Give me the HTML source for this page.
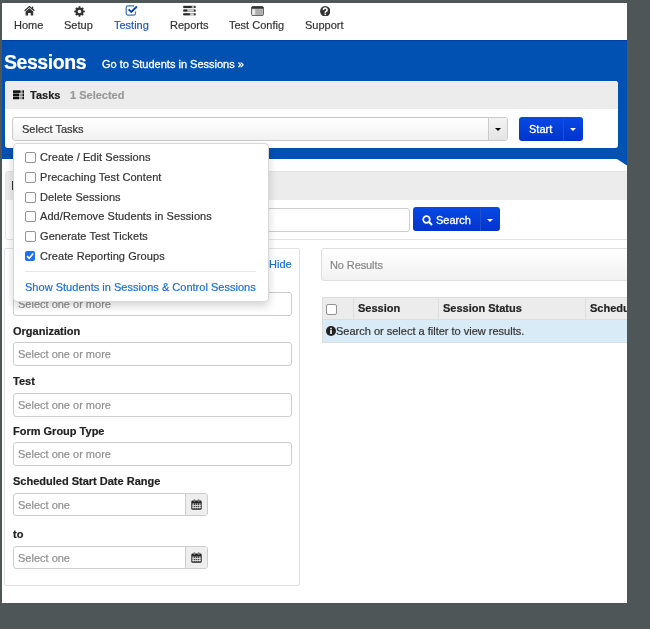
<!DOCTYPE html>
<html><head><meta charset="utf-8">
<style>
*{box-sizing:border-box;margin:0;padding:0}
html,body{width:650px;height:629px;overflow:hidden;background:#4f5657;font-family:"Liberation Sans",sans-serif}
.a{position:absolute}
.t{position:absolute;font-size:11px;line-height:11px;white-space:nowrap;color:#333;will-change:transform;-webkit-text-stroke:0.2px currentColor}
.b{font-weight:bold}
.caret{position:absolute;width:0;height:0;border-left:3px solid transparent;border-right:3px solid transparent;border-top:3px solid #000}
.btn{position:absolute;background:linear-gradient(#0849e6,#0034c9);border-radius:3px}
.inp{position:absolute;border:1px solid #cdcdcd;border-radius:3px;background:#fff}
.ph{color:#8f8f8f}
.chk{position:absolute;width:11px;height:11px;border:1px solid #939393;border-radius:2px;background:#fff}
</style></head><body>
<!-- page -->
<div class="a" style="left:2px;top:3px;width:625px;height:600px;background:#fff"></div>

<!-- nav -->
<svg class="a" style="left:24px;top:6px" width="12" height="10" viewBox="0 0 12 10"><polyline points="0.6,4.7 5.4,0.6 10.4,4.7" fill="none" stroke="#333" stroke-width="1.3"/><rect x="7.9" y="0.6" width="1.3" height="2.6" fill="#333"/><path d="M5.4 2.3 L9.2 5.4 V9.6 H6.7 V6.9 H4.1 V9.6 H1.6 V5.4 Z" fill="#333"/></svg>
<span class="t" style="left:14px;top:20px">Home</span>
<svg class="a" style="left:73.6px;top:5.6px" width="11" height="11" viewBox="0 0 11 11"><circle cx="5.5" cy="5.5" r="3" fill="none" stroke="#333" stroke-width="2.2"/><g stroke="#333" stroke-width="1.7"><line x1="5.5" y1="0.2" x2="5.5" y2="10.8"/><line x1="0.2" y1="5.5" x2="10.8" y2="5.5"/><line x1="1.8" y1="1.8" x2="9.2" y2="9.2"/><line x1="9.2" y1="1.8" x2="1.8" y2="9.2"/></g><circle cx="5.5" cy="5.5" r="1.7" fill="#fff"/></svg>
<span class="t" style="left:64px;top:20px">Setup</span>
<svg class="a" style="left:125px;top:5px" width="13" height="11" viewBox="0 0 13 11"><path d="M9 0.9 H2.7 A1.5 1.5 0 0 0 1.2 2.4 V8.6 A1.5 1.5 0 0 0 2.7 10.1 H9 A1.5 1.5 0 0 0 10.5 8.6 V6.6" fill="none" stroke="#3b6fc4" stroke-width="1.2"/><path d="M3.6 4.4 L6.3 7 L11.9 1.5" fill="none" stroke="#0d3fae" stroke-width="1.9"/></svg>
<span class="t" style="left:114px;top:20px;color:#1d5bb8">Testing</span>
<svg class="a" style="left:183px;top:5px" width="13" height="11" viewBox="0 0 13 11"><g fill="#aaa"><rect x="0" y="0.6" width="12.8" height="2.6" rx="1"/><rect x="0" y="4.3" width="12.8" height="2.6" rx="1"/><rect x="0" y="8" width="12.8" height="2.6" rx="1"/></g><g fill="#2a2a2a"><rect x="0.3" y="0.9" width="8.6" height="2" rx="0.6"/><rect x="0.3" y="4.6" width="4" height="2" rx="0.6"/><rect x="0.3" y="8.3" width="6.6" height="2" rx="0.6"/><rect x="11" y="0.9" width="1.6" height="2" rx="0.6"/><rect x="11" y="4.6" width="1.6" height="2" rx="0.6"/><rect x="11" y="8.3" width="1.6" height="2" rx="0.6"/></g><g fill="#ddd"><rect x="5.2" y="5.2" width="5" height="0.8"/><rect x="7.6" y="8.9" width="2.6" height="0.8"/></g></svg>
<span class="t" style="left:170px;top:20px">Reports</span>
<svg class="a" style="left:250.5px;top:5.6px" width="13" height="10" viewBox="0 0 13 10"><rect x="0.6" y="0.6" width="11.8" height="9" rx="1.2" fill="#cfcfcf" stroke="#5a5a5a" stroke-width="1"/><rect x="0.6" y="0.6" width="11.8" height="2.2" rx="1" fill="#333"/><rect x="1.4" y="3.4" width="2.2" height="5.4" fill="#f2f2f2"/><g stroke="#8a8a8a" stroke-width="0.9"><line x1="4.4" y1="4.2" x2="11.4" y2="4.2"/><line x1="4.4" y1="6.1" x2="11.4" y2="6.1"/><line x1="4.4" y1="8" x2="11.4" y2="8"/></g></svg>
<span class="t" style="left:229px;top:20px">Test Config</span>
<svg class="a" style="left:319.6px;top:5.6px" width="10.5" height="10.5" viewBox="0 0 12 12"><circle cx="6" cy="6" r="5.9" fill="#333"/><path d="M3.9 4.6 A2.1 2.1 0 1 1 6.9 6.3 Q6 6.8 6 7.8" fill="none" stroke="#fff" stroke-width="1.8"/><rect x="5.1" y="8.6" width="1.8" height="1.8" fill="#fff"/></svg>
<span class="t" style="left:305px;top:20px">Support</span>

<!-- banner -->
<div class="a" style="left:2px;top:40px;width:625px;height:119px;background:#0051b1;border-top:1px solid #003ea6"></div>
<svg class="a" style="left:600px;top:158px" width="27" height="8" viewBox="0 0 27 8"><path d="M0 0 H27 V7.5 L17 1 H0 Z" fill="#0051b1"/></svg>
<span class="t b" style="left:4px;top:52.5px;font-size:19.5px;line-height:19.5px;color:#fff;letter-spacing:-0.45px">Sessions</span>
<span class="t" style="left:102px;top:59px;color:#fff;-webkit-text-stroke:0.3px #fff">Go to Students in Sessions »</span>

<!-- tasks card -->
<div class="a" style="left:5px;top:81px;width:613px;height:67px;background:#fff;border-radius:3px;overflow:hidden">
  <div class="a" style="left:0;top:0;width:613px;height:28px;background:#ececec"></div>
</div>
<svg class="a" style="left:13px;top:90px" width="11" height="10" viewBox="0 0 11 10"><g fill="#9a9a9a"><rect x="0" y="0.4" width="11" height="2.5"/><rect x="0" y="3.6" width="11" height="2.5"/><rect x="0" y="6.7" width="11" height="2.5"/></g><g fill="#111"><rect x="0" y="0.4" width="7.4" height="2.5"/><rect x="0" y="3.6" width="6" height="2.5"/><rect x="0" y="6.7" width="6" height="2.5"/><rect x="9.6" y="0.4" width="1.4" height="2.5"/><rect x="9.6" y="3.6" width="1.4" height="2.5"/><rect x="9.6" y="6.7" width="1.4" height="2.5"/></g></svg>
<span class="t b" style="left:30px;top:90px;color:#222">Tasks</span>
<span class="t b" style="left:70px;top:90px;color:#999">1 Selected</span>
<div class="a" style="left:12px;top:117px;width:496px;height:24px;border:1px solid #cbcbcb;border-radius:3px;background:linear-gradient(#fff,#f1f1f1)"></div>
<div class="a" style="left:488px;top:118px;width:19px;height:22px;border-left:1px solid #cbcbcb;background:linear-gradient(#f3f3f3,#e4e4e4);border-radius:0 2px 2px 0"></div>
<div class="caret" style="left:495px;top:128px"></div>
<span class="t" style="left:22px;top:124px">Select Tasks</span>
<div class="btn" style="left:519px;top:117px;width:64px;height:24px"></div>
<div class="a" style="left:563px;top:117px;width:1px;height:24px;background:#1f4fc4"></div>
<span class="t" style="left:528.5px;top:124px;color:#fff;-webkit-text-stroke:0.3px #fff">Start</span>
<div class="caret" style="left:570px;top:128px;border-top-color:#fff"></div>

<!-- search card -->
<div class="a" style="left:5px;top:171px;width:640px;height:69px;border:1px solid #e3e3e3;border-radius:3px;background:#fff;overflow:hidden">
  <div class="a" style="left:0;top:0;width:640px;height:28px;background:#ececec"></div>
</div>
<div class="a" style="left:12px;top:181px;width:1px;height:9px;background:#333"></div>
<div class="inp" style="left:20px;top:208px;width:390px;height:24px"></div>
<div class="btn" style="left:413px;top:207px;width:87px;height:24px"></div>
<div class="a" style="left:480px;top:207px;width:1px;height:24px;background:#1f4fc4"></div>
<svg class="a" style="left:422px;top:215px" width="11" height="11" viewBox="0 0 11 11"><circle cx="4.5" cy="4.5" r="3.3" fill="none" stroke="#fff" stroke-width="1.7"/><line x1="6.8" y1="6.8" x2="10" y2="10" stroke="#fff" stroke-width="2"/></svg>
<span class="t" style="left:435.5px;top:214.5px;color:#fff;-webkit-text-stroke:0.3px #fff">Search</span>
<div class="caret" style="left:487px;top:218.5px;border-top-color:#fff"></div>

<!-- filter panel -->
<div class="a" style="left:4px;top:248px;width:296px;height:338px;border:1px solid #e2e2e2;border-radius:2px"></div>
<span class="t" style="left:269px;top:259px;color:#1a6fd4">Hide</span>
<div class="inp" style="left:13px;top:292px;width:279px;height:24px"></div>
<span class="t ph" style="left:18px;top:299px">Select one or more</span>
<span class="t b" style="left:13px;top:326px;color:#222">Organization</span>
<div class="inp" style="left:13px;top:342px;width:279px;height:24px"></div>
<span class="t ph" style="left:18px;top:349px">Select one or more</span>
<span class="t b" style="left:13px;top:376px;color:#222">Test</span>
<div class="inp" style="left:13px;top:392.5px;width:279px;height:24px"></div>
<span class="t ph" style="left:18px;top:399.5px">Select one or more</span>
<span class="t b" style="left:13px;top:426px;color:#222">Form Group Type</span>
<div class="inp" style="left:13px;top:442px;width:279px;height:24px"></div>
<span class="t ph" style="left:18px;top:449px">Select one or more</span>
<span class="t b" style="left:13px;top:476px;color:#222">Scheduled Start Date Range</span>
<div class="inp" style="left:13px;top:493px;width:195px;height:23px"></div>
<div class="a" style="left:185px;top:494px;width:22px;height:21px;border-left:1px solid #cdcdcd;background:#eee;border-radius:0 2px 2px 0"></div>
<span class="t ph" style="left:18px;top:500px">Select one</span>
<span class="t b" style="left:13px;top:529px;color:#222">to</span>
<div class="inp" style="left:13px;top:546px;width:195px;height:23px"></div>
<div class="a" style="left:185px;top:547px;width:22px;height:21px;border-left:1px solid #cdcdcd;background:#eee;border-radius:0 2px 2px 0"></div>
<span class="t ph" style="left:18px;top:553px">Select one</span>
<svg class="a" style="left:191px;top:499px" width="11" height="11" viewBox="0 0 11 11"><rect x="0.3" y="1.6" width="10.4" height="9.2" rx="1.3" fill="#222"/><rect x="1.3" y="4.3" width="8.4" height="5.3" fill="#aaa"/><g fill="#222"><rect x="3.2" y="4.3" width="0.8" height="5.3"/><rect x="5.1" y="4.3" width="0.8" height="5.3"/><rect x="7" y="4.3" width="0.8" height="5.3"/></g><g fill="#eee"><rect x="1.3" y="6.2" width="8.4" height="0.8"/><rect x="1.3" y="8.1" width="8.4" height="0.8"/></g><g fill="#777"><rect x="2.6" y="0.2" width="1.6" height="2.8" rx="0.6"/><rect x="6.8" y="0.2" width="1.6" height="2.8" rx="0.6"/></g></svg>
<svg class="a" style="left:191px;top:552px" width="11" height="11" viewBox="0 0 11 11"><rect x="0.3" y="1.6" width="10.4" height="9.2" rx="1.3" fill="#222"/><rect x="1.3" y="4.3" width="8.4" height="5.3" fill="#aaa"/><g fill="#222"><rect x="3.2" y="4.3" width="0.8" height="5.3"/><rect x="5.1" y="4.3" width="0.8" height="5.3"/><rect x="7" y="4.3" width="0.8" height="5.3"/></g><g fill="#eee"><rect x="1.3" y="6.2" width="8.4" height="0.8"/><rect x="1.3" y="8.1" width="8.4" height="0.8"/></g><g fill="#777"><rect x="2.6" y="0.2" width="1.6" height="2.8" rx="0.6"/><rect x="6.8" y="0.2" width="1.6" height="2.8" rx="0.6"/></g></svg>

<!-- results -->
<div class="a" style="left:321px;top:248px;width:320px;height:33px;border:1px solid #dedede;border-radius:3px;background:linear-gradient(#fff,#f2f2f2)"></div>
<span class="t ph" style="left:330px;top:260px;color:#888;letter-spacing:-0.1px">No Results</span>
<div class="a" style="left:322px;top:297px;width:320px;height:46px;border:1px solid #dedede;background:#d9ebf7"></div>
<div class="a" style="left:323px;top:298px;width:320px;height:22px;background:#ececec;border-bottom:1px solid #dedede"></div>
<div class="a" style="left:353px;top:298px;width:1px;height:22px;background:#dedede"></div>
<div class="a" style="left:438px;top:298px;width:1px;height:22px;background:#dedede"></div>
<div class="a" style="left:585px;top:298px;width:1px;height:22px;background:#dedede"></div>
<div class="chk" style="left:326px;top:304px;width:11px;height:11px"></div>
<span class="t b" style="left:358px;top:303px;color:#222">Session</span>
<span class="t b" style="left:443px;top:303px;color:#222">Session Status</span>
<span class="t b" style="left:590px;top:303px;color:#222">Schedule</span>
<svg class="a" style="left:326px;top:326px" width="10" height="10" viewBox="0 0 10 10"><circle cx="5" cy="5" r="5" fill="#222"/><rect x="4.2" y="4" width="1.6" height="4" fill="#fff"/><rect x="4.2" y="1.8" width="1.6" height="1.5" fill="#fff"/></svg>
<span class="t" style="left:336px;top:326px">Search or select a filter to view results.</span>
<!-- right gray cover -->
<div class="a" style="left:627px;top:0;width:23px;height:629px;background:#4f5657"></div>

<!-- dropdown menu -->
<div class="a" style="left:13px;top:143px;width:256px;height:159px;background:#fff;border:1px solid #d8d8d8;border-radius:4px;box-shadow:0 4px 9px rgba(0,0,0,.17)"></div>
<div class="chk" style="left:25px;top:152px"></div><span class="t" style="left:40px;top:152px;letter-spacing:0.08px">Create / Edit Sessions</span>
<div class="chk" style="left:25px;top:172px"></div><span class="t" style="left:40px;top:172px;letter-spacing:0.08px">Precaching Test Content</span>
<div class="chk" style="left:25px;top:191.5px"></div><span class="t" style="left:40px;top:191.5px;letter-spacing:0.08px">Delete Sessions</span>
<div class="chk" style="left:25px;top:211px"></div><span class="t" style="left:40px;top:211px;letter-spacing:0.08px">Add/Remove Students in Sessions</span>
<div class="chk" style="left:25px;top:231px"></div><span class="t" style="left:40px;top:231px;letter-spacing:0.08px">Generate Test Tickets</span>
<div class="a" style="left:25px;top:251px;width:10px;height:10px;border-radius:2px;background:#1a73e8"></div>
<svg class="a" style="left:25px;top:251px" width="10" height="10" viewBox="0 0 10 10"><path d="M2 5.2 L4.2 7.3 L8.2 2.6" fill="none" stroke="#fff" stroke-width="1.6"/></svg>
<span class="t" style="left:40px;top:251px;letter-spacing:0.08px">Create Reporting Groups</span>
<div class="a" style="left:25px;top:271px;width:231px;height:1px;background:#e6e6e6"></div>
<span class="t" style="left:25px;top:282px;color:#1a6fd4;letter-spacing:0.02px">Show Students in Sessions &amp; Control Sessions</span>
</body></html>
